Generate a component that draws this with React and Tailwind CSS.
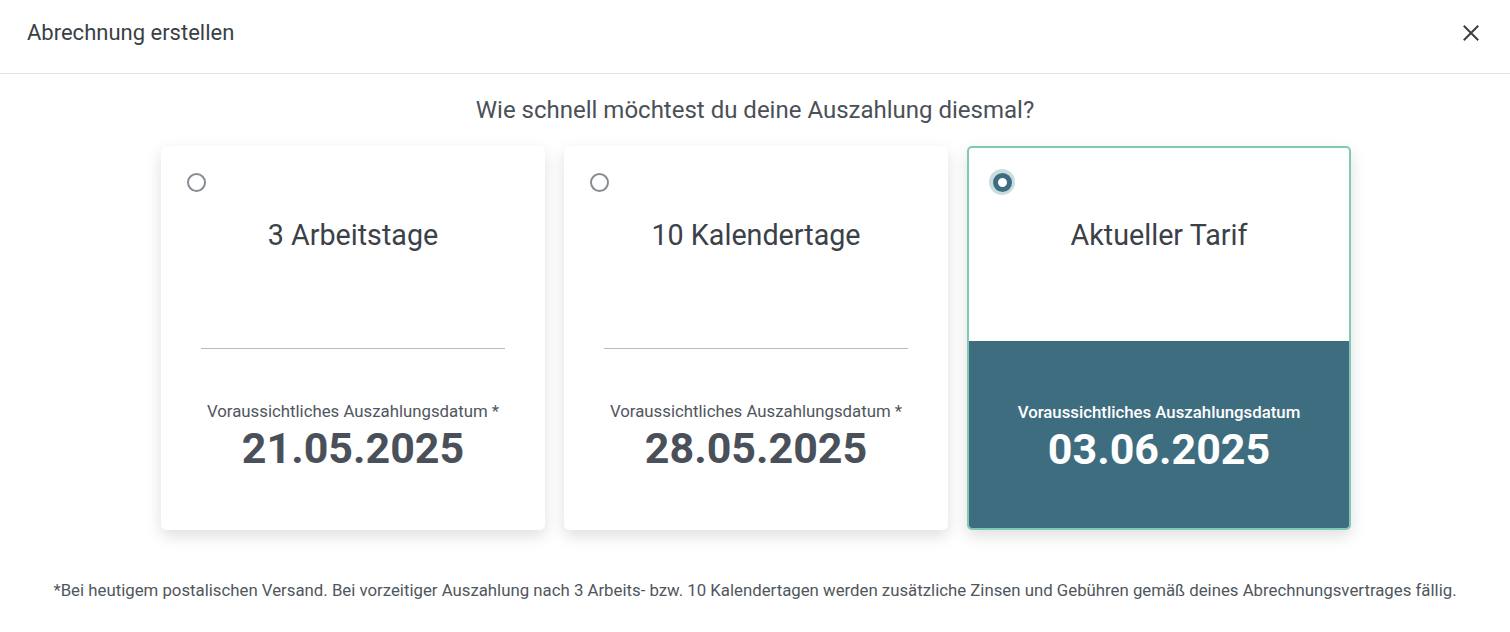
import React, { useState } from 'react';

const options = [
    { id: 'fast', title: '3 Arbeitstage', date: '21.05.2025', note: true },
    { id: 'standard', title: '10 Kalendertage', date: '28.05.2025', note: true },
    { id: 'tariff', title: 'Aktueller Tarif', date: '03.06.2025', note: false },
];

const Radio = ({ checked }) => (
    checked ? (
        <span className="flex items-center justify-center w-[26px] h-[26px] rounded-full bg-[#cbdce1]">
            <span className="w-[19px] h-[19px] rounded-full border-[5px] border-[#3e6d80] bg-white" />
        </span>
    ) : (
        <span className="flex items-center justify-center w-[26px] h-[26px]">
            <span className="w-[19px] h-[19px] rounded-full border-2 border-[#868c93] bg-white" />
        </span>
    )
);

const OptionCard = ({ option, selected, onSelect }) => (
    <button
        type="button"
        onClick={onSelect}
        className={`w-[384px] h-[384px] flex flex-col rounded-[5px] border-2 overflow-hidden bg-white text-left shadow-[0_6px_16px_rgba(0,0,0,0.13)] ${selected ? 'border-[#80c9b9]' : 'border-white'}`}
    >
        <div className="h-[193px] flex flex-col">
            <div className="pt-[21px] pl-[20px]">
                <Radio checked={selected} />
            </div>
            <div className="mt-[22px] text-center text-[28.7px] leading-[36px] text-[#3b4148]">{option.title}</div>
        </div>
        <div className={`flex-1 flex flex-col ${selected ? 'bg-[#3e6d80]' : ''}`}>
            {!selected && <div className="mx-[38px] mt-[7px] h-px bg-[#b3bac1]" />}
            <div className={`flex-1 flex flex-col items-center justify-center ${selected ? 'pt-[7px]' : 'pb-[3px]'}`}>
                <div className={`text-[16.8px] leading-[22px] ${selected ? 'text-white font-medium' : 'text-[#50565d]'}`}>
                    Voraussichtliches Auszahlungsdatum{option.note ? ' *' : ''}
                </div>
                <div className={`text-[43px] leading-[52px] font-bold ${selected ? 'text-white' : 'text-[#4a5059]'}`}>{option.date}</div>
            </div>
        </div>
    </button>
);

export default function App() {
    const [selected, setSelected] = useState('tariff');

    return (
        <div className="min-h-screen bg-white font-['Roboto',sans-serif]">
            <div className="h-[74px] flex items-center justify-between pl-[27px] pr-[31px] pb-[8px] border-b border-[#e3e3e3]">
                <h1 className="text-[22px] leading-[28px] text-[#3a3f45]">Abrechnung erstellen</h1>
                <button type="button" className="w-4 h-4 text-[#3a3f45]">
                    <svg viewBox="0 0 16 16" width="16" height="16" fill="none" stroke="currentColor" strokeWidth="2" strokeLinecap="square">
                        <path d="M1.5 1.5 L14.5 14.5 M14.5 1.5 L1.5 14.5" />
                    </svg>
                </button>
            </div>
            <p className="mt-[21px] text-center text-[24px] leading-[30px] text-[#4a5058]">
                Wie schnell möchtest du deine Auszahlung diesmal?
            </p>
            <div className="mt-[21px] flex justify-center gap-[19px] pl-[2px]">
                {options.map((o) => (
                    <OptionCard key={o.id} option={o} selected={selected === o.id} onSelect={() => setSelected(o.id)} />
                ))}
            </div>
            <p className="mt-[48px] text-center text-[16.8px] leading-[24px] text-[#50565d]">
                *Bei heutigem postalischen Versand. Bei vorzeitiger Auszahlung nach 3 Arbeits- bzw. 10 Kalendertagen werden zusätzliche Zinsen und Gebühren gemäß deines Abrechnungsvertrages fällig.
            </p>
        </div>
    );
}
